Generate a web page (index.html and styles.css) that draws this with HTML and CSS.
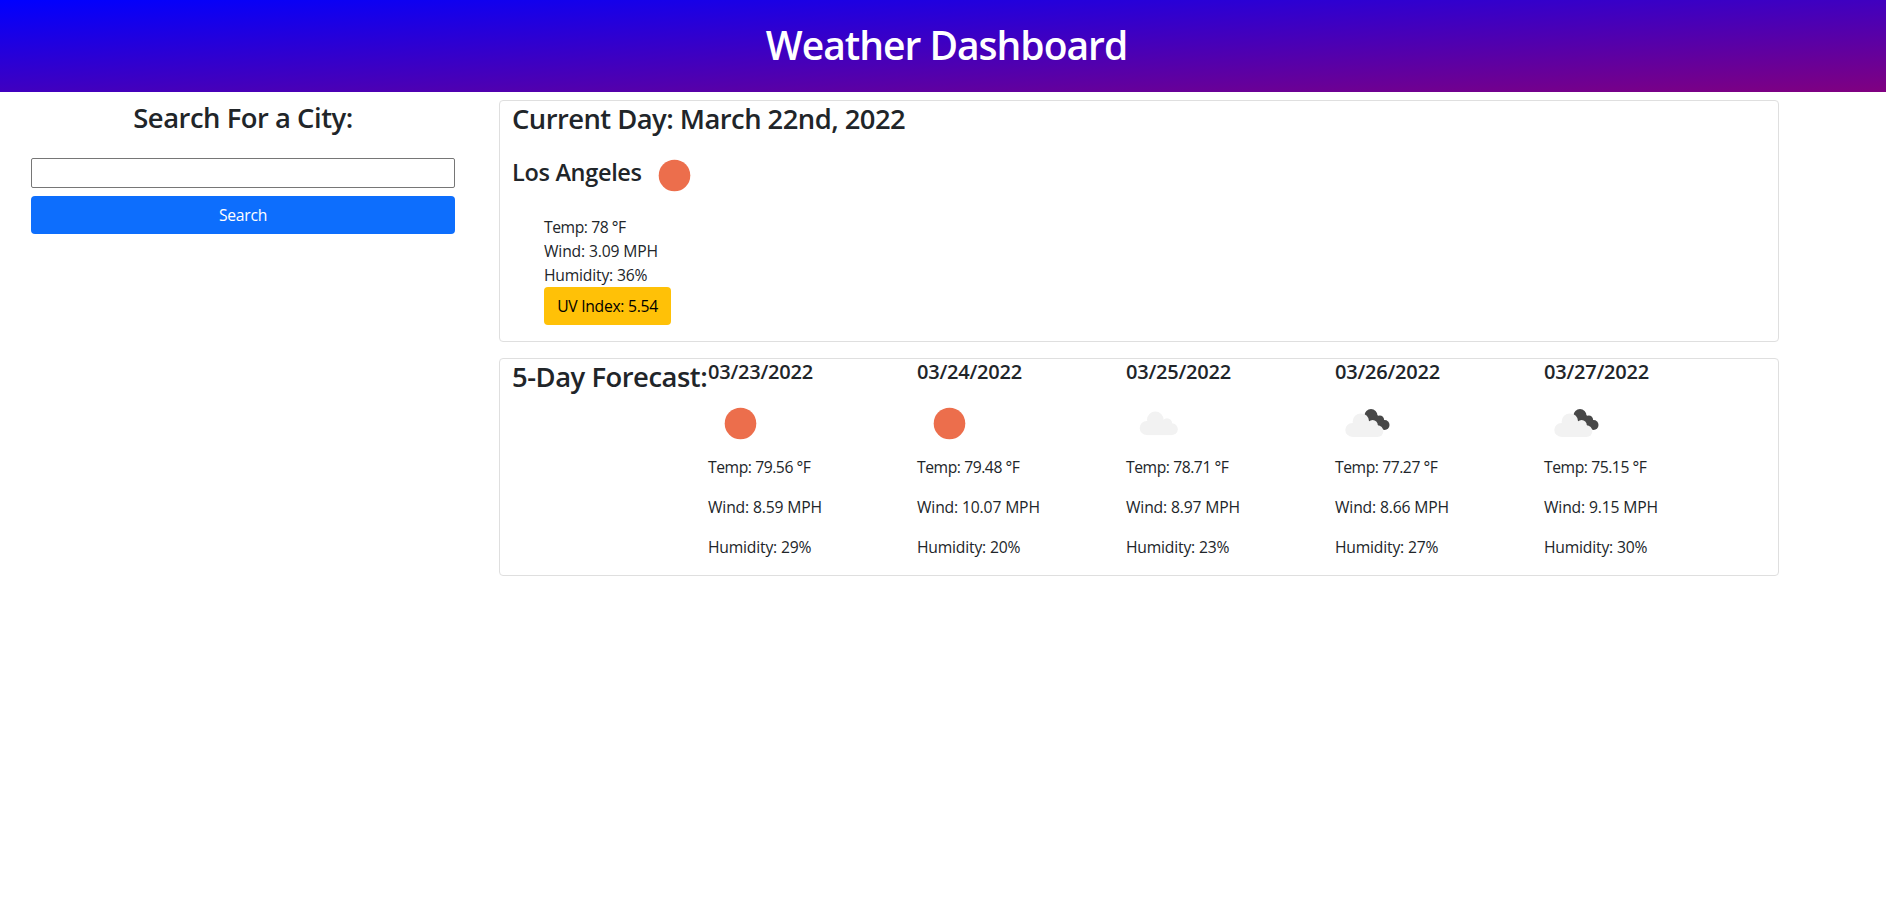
FILE: index.html
```html
<!DOCTYPE html>
<html lang="en">
<head>
<meta charset="utf-8">
<title>Weather Dashboard</title>
<link rel="stylesheet" href="styles.css">
</head>
<body>
<svg width="0" height="0" class="defs">
  <symbol id="sun" viewBox="0 0 65 65"><circle cx="32.5" cy="32.5" r="15.8" fill="#ec6e4c"/></symbol>
  <symbol id="cloud" viewBox="0 0 65 65">
    <g fill="#f2f2f2"><circle cx="20.7" cy="37" r="7"/><circle cx="29.3" cy="28.8" r="8.3"/><circle cx="41" cy="32.4" r="5.2"/><circle cx="45.9" cy="38.2" r="5.9"/><rect x="20.7" y="32" width="25.2" height="12.1"/></g>
  </symbol>
  <symbol id="clouds" viewBox="0 0 65 65">
    <g fill="#484848"><circle cx="36" cy="24.5" r="6.5"/><circle cx="44.8" cy="28.8" r="4.3"/><circle cx="49.6" cy="34" r="4.9"/><path d="M37 30l5-6 8 6-3 8z"/></g>
    <g fill="#f2f2f2" transform="translate(-3.4 1.9)"><circle cx="20.7" cy="37" r="7"/><circle cx="29.3" cy="28.8" r="8.3"/><circle cx="41" cy="32.4" r="5.2"/><circle cx="45.9" cy="38.2" r="5.9"/><rect x="20.7" y="32" width="25.2" height="12.1"/></g>
  </symbol>
</svg>
<header class="banner"><h1>Weather Dashboard</h1></header>
<main class="layout">
  <aside class="search">
    <h2>Search For a City:</h2>
    <input class="field" type="text" aria-label="City">
    <button class="btn primary">Search</button>
  </aside>
  <div class="content">
    <section class="card current">
      <h2 class="day-title">Current Day: March 22nd, 2022</h2>
      <div class="city"><h3>Los Angeles</h3><svg class="icon"><use href="#sun"/></svg></div>
      <ul class="stats">
        <li class="temp">Temp: 78 °F</li><li class="wind">Wind: 3.09 MPH</li><li class="humidity">Humidity: 36%</li>
        <li><button class="btn warning">UV Index: 5.54</button></li>
      </ul>
    </section>
    <section class="card forecast">
      <h2 class="forecast-title">5-Day Forecast:</h2>
      <div class="day"><h5>03/23/2022</h5><svg class="icon"><use href="#sun"/></svg><p class="temp">Temp: 79.56 °F</p><p class="wind">Wind: 8.59 MPH</p><p class="humidity">Humidity: 29%</p></div>
      <div class="day"><h5>03/24/2022</h5><svg class="icon"><use href="#sun"/></svg><p class="temp">Temp: 79.48 °F</p><p class="wind">Wind: 10.07 MPH</p><p class="humidity">Humidity: 20%</p></div>
      <div class="day"><h5>03/25/2022</h5><svg class="icon"><use href="#cloud"/></svg><p class="temp">Temp: 78.71 °F</p><p class="wind">Wind: 8.97 MPH</p><p class="humidity">Humidity: 23%</p></div>
      <div class="day"><h5>03/26/2022</h5><svg class="icon"><use href="#clouds"/></svg><p class="temp">Temp: 77.27 °F</p><p class="wind">Wind: 8.66 MPH</p><p class="humidity">Humidity: 27%</p></div>
      <div class="day"><h5>03/27/2022</h5><svg class="icon"><use href="#clouds"/></svg><p class="temp">Temp: 75.15 °F</p><p class="wind">Wind: 9.15 MPH</p><p class="humidity">Humidity: 30%</p></div>
    </section>
  </div>
</main>
</body>
</html>
```

FILE: styles.css
```css
* { box-sizing: border-box; }
body { margin: 0; background: #fff; color: #212529; font: 400 15.7px/24px "Segoe UI", "Open Sans", sans-serif; }
h1, h2, h3, h5, p, ul { margin: 0; padding: 0; font-weight: 600; white-space: nowrap; }
p, ul { font-weight: 400; }
.defs { position: absolute; }
.banner { height: 92px; padding: 20px 0 0 7px; text-align: center; color: #fff; background: linear-gradient(to bottom right, blue, purple); }
h1 { font-size: 39px; line-height: 49px; letter-spacing: -1px; }
h2 { font-size: 27.4px; line-height: 35px; letter-spacing: -0.47px; }
h3 { font-size: 23.5px; line-height: 30px; letter-spacing: -0.32px; }
h5 { font-size: 20px; line-height: 25px; letter-spacing: -0.22px; }
.day-title { letter-spacing: -0.54px; }
.temp { letter-spacing: -0.44px; }
.wind { letter-spacing: -0.15px; }
.humidity { letter-spacing: -0.2px; }
.layout { display: flex; }
.search { width: 499px; padding: 8px 44px 0 31px; display: flex; flex-direction: column; }
.search h2 { text-align: center; margin-bottom: 23px; }
.field { height: 30px; width: 424px; border: 1px solid #767676; border-radius: 2px; background: #fff; margin-bottom: 8px; padding: 0; }
.btn { font: inherit; height: 38px; border: 0; border-radius: 4px; padding: 0 13px; letter-spacing: -0.29px; }
.primary { background: #0d6efd; color: #fff; }
.warning { background: #ffc107; color: #000; display: block; width: 127px; white-space: nowrap; }
.content { width: 1280px; padding-top: 8px; display: flex; flex-direction: column; gap: 16px; }
.card { border: 1px solid #dfdfdf; border-radius: 4px; padding: 0 12px; }
.current { height: 242px; }
.city { display: flex; margin-top: 7px; height: 65px; }
.city h3 { width: 130px; margin-top: 14px; }
.icon { display: block; width: 65px; height: 65px; flex: none; }
.stats { list-style: none; padding-left: 32px; margin-top: 7px; }
.forecast { height: 218px; display: flex; }
.forecast-title { width: 196px; }
.day { width: 209px; flex: none; }
.day h5 { margin-bottom: 7px; }
.day .icon { margin-bottom: -1px; }
.day p { margin-bottom: 16px; }
```
